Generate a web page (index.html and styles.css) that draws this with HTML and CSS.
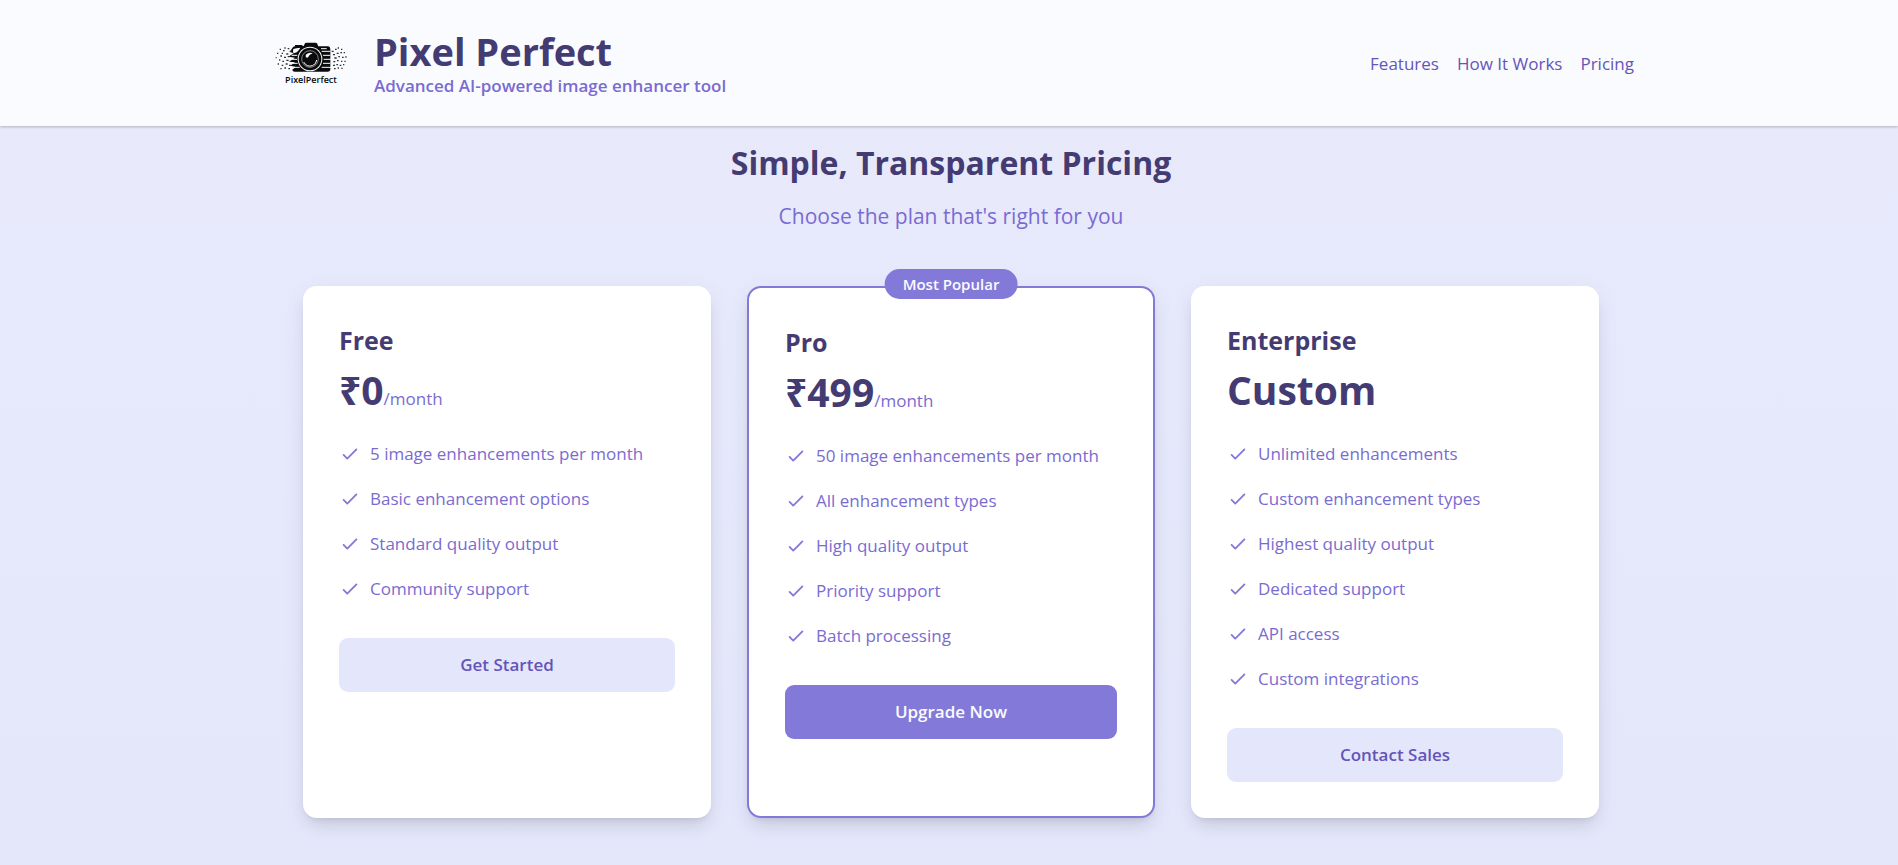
FILE: index.html
```html
<!DOCTYPE html>
<html lang="en">
<head>
<meta charset="utf-8">
<meta name="viewport" content="width=device-width, initial-scale=1">
<title>Pixel Perfect</title>
<link rel="stylesheet" href="styles.css">
</head>
<body>
<svg class="sprite" aria-hidden="true">
  <symbol id="check" viewBox="0 0 24 24"><path d="M5 13l4 4L19 7" fill="none" stroke="currentColor" stroke-width="2" stroke-linecap="round" stroke-linejoin="round"/></symbol>
</svg>
<header class="header">
  <div class="header-inner">
    <div class="brand">
      <svg class="logo" viewBox="21 -6 270 270" role="img" aria-label="PixelPerfect logo">
        <path d="M100 84q2-4 8-5v-4h22v3h4l4-8q1-2 4-2h28q3 0 4 2l4 9h29q7 1 7 8v60q0 8-8 8h-98q-8 0-8-6l10-8-16-4 14-10-18-2 18-12-20-3 16-10-12-4z" fill="#0b0b0c"/>
        <path d="M104 88l18-3-8 10-10 3zM188 94h26M192 106h22M194 118h24M192 130h22M188 142h28M98 130h18M102 142h20M92 118h22M98 106h17" fill="#fafbff" stroke="#fafbff" stroke-width="3"/>
        <circle cx="153" cy="117" r="37" fill="#fafbff"/>
        <circle cx="153" cy="117" r="34" fill="#0b0b0c"/>
        <circle cx="153" cy="117" r="25" fill="none" stroke="#b9bac2" stroke-width="2"/>
        <path d="M142 103q10-8 19-2-10 1-13 10-3 4-7 1-3-4 1-9z" fill="#fafbff"/>
        <path d="M134 126q9 16 26 11 12-4 13-17" fill="none" stroke="#fafbff" stroke-width="3"/>
        <path d="M186 86h17" stroke="#fafbff" stroke-width="3"/>
        <path d="M92 94h6M82 102h6M72 92h5M62 88h4M76 84h4M86 86h5M54 100h4M64 108h5M75 112h6M86 110h6M50 113h3M60 120h4M70 124h5M82 121h7M56 132h4M68 136h5M80 132h6M90 136h7M64 146h4M76 144h5M88 146h5M68 100h4M218 94h6M228 88h5M236 84h4M246 88h4M222 104h6M233 100h6M244 98h5M254 98h4M226 114h7M238 110h5M249 112h5M259 111h4M223 125h6M234 122h5M246 124h4M256 124h4M222 136h6M232 134h5M242 136h5M252 134h4M225 146h5M236 144h4M247 145h4" stroke="#333439" stroke-width="4"/>
        <text class="logo-text" x="156" y="188" text-anchor="middle">PixelPerfect</text>
      </svg>
      <div class="brand-text">
        <h1 class="brand-name">Pixel Perfect</h1>
        <p class="tagline">Advanced AI-powered image enhancer tool</p>
      </div>
    </div>
    <nav class="nav">
      <a href="#features">Features</a>
      <a href="#how">How It Works</a>
      <a href="#pricing">Pricing</a>
    </nav>
  </div>
</header>
<main class="pricing" id="pricing">
  <div class="container">
    <h2 class="heading">Simple, Transparent Pricing</h2>
    <p class="subheading">Choose the plan that's right for you</p>
    <div class="plans">
      <article class="plan">
        <h3 class="plan-name">Free</h3>
        <p class="price">₹0<span class="period">/month</span></p>
        <ul class="features">
          <li><svg class="check"><use href="#check"/></svg>5 image enhancements per month</li>
          <li><svg class="check"><use href="#check"/></svg>Basic enhancement options</li>
          <li><svg class="check"><use href="#check"/></svg>Standard quality output</li>
          <li><svg class="check"><use href="#check"/></svg>Community support</li>
        </ul>
        <button class="button" type="button">Get Started</button>
      </article>
      <article class="plan plan-featured">
        <span class="badge">Most Popular</span>
        <h3 class="plan-name">Pro</h3>
        <p class="price">₹499<span class="period">/month</span></p>
        <ul class="features">
          <li><svg class="check"><use href="#check"/></svg>50 image enhancements per month</li>
          <li><svg class="check"><use href="#check"/></svg>All enhancement types</li>
          <li><svg class="check"><use href="#check"/></svg>High quality output</li>
          <li><svg class="check"><use href="#check"/></svg>Priority support</li>
          <li><svg class="check"><use href="#check"/></svg>Batch processing</li>
        </ul>
        <button class="button button-primary" type="button">Upgrade Now</button>
      </article>
      <article class="plan">
        <h3 class="plan-name">Enterprise</h3>
        <p class="price">Custom</p>
        <ul class="features">
          <li><svg class="check"><use href="#check"/></svg>Unlimited enhancements</li>
          <li><svg class="check"><use href="#check"/></svg>Custom enhancement types</li>
          <li><svg class="check"><use href="#check"/></svg>Highest quality output</li>
          <li><svg class="check"><use href="#check"/></svg>Dedicated support</li>
          <li><svg class="check"><use href="#check"/></svg>API access</li>
          <li><svg class="check"><use href="#check"/></svg>Custom integrations</li>
        </ul>
        <button class="button" type="button">Contact Sales</button>
      </article>
    </div>
  </div>
</main>
</body>
</html>
```
FILE: styles.css
```css
*, *::before, *::after { box-sizing: border-box; }
h1, h2, h3, p, ul { margin: 0; padding: 0; }
body {
  margin: 0;
  min-height: 100vh;
  background: linear-gradient(#e8eafc, #e4e7fa);
  font-family: "Segoe UI", "Open Sans", "Noto Sans", sans-serif;
  font-size: 17px;
  line-height: 27px;
  color: #7a6bd1;
}
.sprite { position: absolute; width: 0; height: 0; }
.header {
  position: relative;
  background: #fafbff;
  box-shadow: 0 1px 3px rgba(0, 0, 0, .15), 0 1px 2px rgba(0, 0, 0, .1);
}
.header-inner {
  display: flex;
  align-items: center;
  justify-content: space-between;
  max-width: 1440px;
  margin: 0 auto;
  padding: 18px 35px 18px 37px;
}
.brand { display: flex; align-items: center; gap: 18px; }
.logo { width: 90px; height: 90px; }
.logo-text { font: 600 27px "Open Sans", sans-serif; fill: #0b0b0c; }
.brand-text { padding-top: 2px; }
.brand-name { font-size: 38px; line-height: 42px; font-weight: 700; color: #433b72; }
.tagline { font-weight: 600; }
.nav { display: flex; gap: 18px; }
.nav a { color: #6554b8; text-decoration: none; }
.pricing { padding: 18px 32px 48px 36px; }
.container { max-width: 1296px; margin: 0 auto; }
.heading { font-size: 32px; line-height: 38px; font-weight: 700; color: #433b72; text-align: center; }
.subheading { margin: 18px 0 54px; font-size: 21px; line-height: 32px; text-align: center; }
.plans { display: grid; grid-template-columns: repeat(3, 1fr); gap: 36px; }
.plan {
  position: relative;
  padding: 36px;
  background: #fff;
  border-radius: 14px;
  box-shadow: 0 10px 16px -4px rgba(0, 0, 0, .1), 0 4px 6px -4px rgba(0, 0, 0, .1), 0 6px 24px rgba(67, 59, 114, .06);
}
.plan-featured { border: 2px solid #8379d9; }
.badge {
  position: absolute;
  top: -19px;
  left: 50%;
  transform: translateX(-50%);
  padding: 1px 18px 0;
  border-radius: 15px;
  background: #8379d9;
  color: #fafbff;
  font-size: 15px;
  line-height: 29px;
  font-weight: 600;
  white-space: nowrap;
}
.plan-name { margin-bottom: 9px; font-size: 25px; line-height: 36px; font-weight: 700; color: #433b72; }
.price { margin-bottom: 27px; font-size: 39px; line-height: 46px; font-weight: 700; color: #433b72; }
.period { font-size: 17px; line-height: 27px; font-weight: 400; color: #7a6bd1; }
.features { display: grid; gap: 18px; margin-bottom: 36px; list-style: none; }
.features li { display: flex; align-items: center; gap: 9px; }
.check { width: 22px; height: 22px; flex: none; color: #8379d9; }
.button {
  display: block;
  width: 100%;
  padding: 13px 18px 14px;
  border: 0;
  border-radius: 9px;
  background: #e4e7fb;
  color: #6554b8;
  font: inherit;
  font-weight: 600;
  cursor: pointer;
}
.button-primary { background: #8379d9; color: #fafbff; }
```
